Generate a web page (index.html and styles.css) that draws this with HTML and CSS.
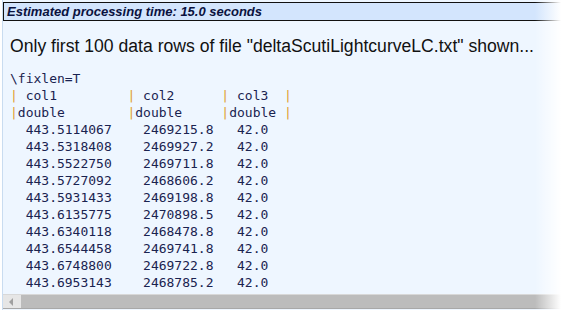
FILE: index.html
```html
<!DOCTYPE html>
<html>
<head>
<meta charset="utf-8">
<link rel="stylesheet" href="styles.css">
</head>
<body>
<div class="frame">
  <div class="estimate">Estimated processing time: 15.0 seconds</div>
  <div class="content">
    <p class="title">Only first 100 data rows of file "deltaScutiLightcurveLC.txt" shown...</p>
<pre class="table">\fixlen=T
<span class="p">|</span> col1         <span class="p">|</span> col2      <span class="p">|</span> col3  <span class="p">|</span>
<span class="p">|</span>double        <span class="p">|</span>double     <span class="p">|</span>double <span class="p">|</span>
  443.5114067    2469215.8   42.0
  443.5318408    2469927.2   42.0
  443.5522750    2469711.8   42.0
  443.5727092    2468606.2   42.0
  443.5931433    2469198.8   42.0
  443.6135775    2470898.5   42.0
  443.6340118    2468478.8   42.0
  443.6544458    2469741.8   42.0
  443.6748800    2469722.8   42.0
  443.6953143    2468785.2   42.0</pre>
  </div>
  <div class="hscroll">
    <span class="arrow"></span>
    <div class="thumb"></div>
  </div>
  <div class="fade"></div>
</div>
</body>
</html>
```
FILE: styles.css
```css
html, body {
  margin: 0;
  padding: 0;
  background: #ffffff;
}
body {
  width: 561px;
  height: 316px;
  overflow: hidden;
}
.frame {
  position: relative;
  margin-left: 2px;
  height: 310px;
  border-left: 1px solid #c9dcf0;
  background: #eef6ff;
  display: flex;
  flex-direction: column;
  overflow: hidden;
}
.estimate {
  margin-top: 2px;
  height: 17px;
  border-top: 1px solid #111;
  border-bottom: 1px solid #111;
  border-left: 1px solid #111;
  background: #d3e5fd;
  color: #0a1240;
  font-family: "Liberation Sans", Arial, sans-serif;
  font-weight: bold;
  font-style: italic;
  font-size: 13px;
  line-height: 17px;
  padding-left: 3px;
  white-space: nowrap;
}
.content {
  flex: 1;
  padding-left: 7px;
  overflow: hidden;
}
.title {
  margin: 14px 0 0 0;
  font-family: "Liberation Sans", Arial, sans-serif;
  font-size: 17.6px;
  line-height: 22px;
  color: #111;
  white-space: nowrap;
}
.table {
  margin: 13px 0 0 0;
  font-family: "DejaVu Sans Mono", monospace;
  font-size: 13px;
  line-height: 17px;
  color: #1a2350;
}
.p {
  color: #e0a030;
}
.hscroll {
  height: 13px;
  margin-bottom: 1px;
  background: #e6e6e6;
  border-top: 1px solid #d8d8d8;
  border-bottom: 1px solid #a8a8a8;
  display: flex;
  align-items: center;
}
.arrow {
  width: 0;
  height: 0;
  margin-left: 6px;
  border-top: 4px solid transparent;
  border-bottom: 4px solid transparent;
  border-right: 4px solid #a0a0a0;
}
.thumb {
  margin-left: 8px;
  flex: 1;
  height: 13px;
  background: #bcbcbc;
}
.fade {
  position: absolute;
  top: 0;
  right: 0;
  width: 26px;
  height: 100%;
  background: linear-gradient(to right, rgba(255,255,255,0), #ffffff);
}
```
